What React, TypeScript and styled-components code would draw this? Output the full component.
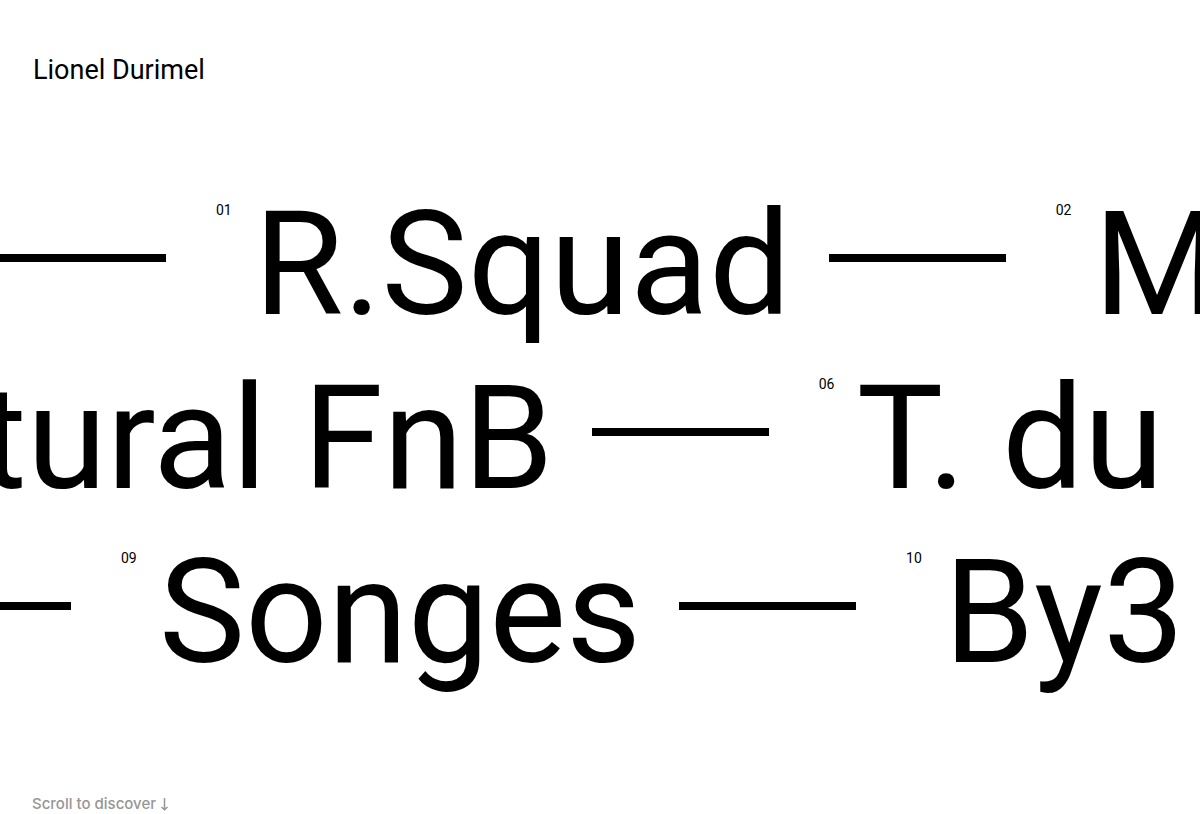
import React from "react";
import styled, { createGlobalStyle } from "styled-components";

const GlobalStyle = createGlobalStyle`
  * { box-sizing: border-box; }
  body {
    margin: 0;
    background: #fff;
    color: #000;
    font-family: Roboto, "Liberation Sans", sans-serif;
  }
`;

const Page = styled.div`
  display: flex;
  flex-direction: column;
  min-height: 100vh;
  overflow: hidden;
`;

const Header = styled.header`
  padding: 54px 33px 0;
`;

const Brand = styled.a`
  color: inherit;
  font-size: 27px;
  line-height: 32px;
  text-decoration: none;
`;

const Projects = styled.main`
  flex: 1;
  padding-top: 91px;
`;

const Row = styled.ul<{ $shift: number }>`
  display: flex;
  align-items: center;
  width: max-content;
  margin: 0 0 0 ${(p) => p.$shift}px;
  padding: 0;
  list-style: none;
`;

const Item = styled.li`
  display: flex;
`;

const ProjectLink = styled.a`
  display: flex;
  color: inherit;
  text-decoration: none;
`;

const Index = styled.span`
  width: 38px;
  padding-top: 23px;
  font-size: 14px;
  line-height: 20px;
`;

const Title = styled.span`
  font-size: 145px;
  line-height: 174px;
  white-space: nowrap;
`;

const Dash = styled.span`
  align-self: center;
  width: 177px;
  height: 8px;
  margin: 0 50px 12px 38px;
  background: #000;
`;

const Footer = styled.footer`
  padding: 0 32px;
`;

const ScrollHint = styled.p`
  display: flex;
  align-items: center;
  gap: 4px;
  margin: 0;
  color: #969696;
  font-family: Inter, Roboto, sans-serif;
  font-size: 15px;
  font-weight: 500;
  line-height: 20px;
`;

type Project = { index?: string; title?: string };

const rows: { shift: number; projects: Project[] }[] = [
  { shift: -49, projects: [{}, { index: "01", title: "R.Squad" }, { index: "02", title: "M" }] },
  { shift: -241, projects: [{ index: "05", title: "Natural FnB" }, { index: "06", title: "T. du" }] },
  { shift: -144, projects: [{}, { index: "09", title: "Songes" }, { index: "10", title: "By3" }] },
];

export default function App() {
  return (
    <Page>
      <GlobalStyle />
      <Header>
        <Brand href="#">Lionel Durimel</Brand>
      </Header>
      <Projects>
        {rows.map(({ shift, projects }) => (
          <Row key={shift} $shift={shift}>
            {projects.map(({ index, title }, i) => (
              <Item key={i}>
                {title && (
                  <ProjectLink href={`#${index}`}>
                    <Index>{index}</Index>
                    <Title>{title}</Title>
                  </ProjectLink>
                )}
                {i < projects.length - 1 && <Dash />}
              </Item>
            ))}
          </Row>
        ))}
      </Projects>
      <Footer>
        <ScrollHint>
          Scroll to discover
          <svg width="9" height="14" viewBox="0 0 9 14" fill="none" stroke="currentColor" strokeWidth="1.5" aria-hidden="true">
            <path d="M4.5 1v11.5M1.5 10l3 2.8L7.500 10" />
          </svg>
        </ScrollHint>
      </Footer>
    </Page>
  );
}
